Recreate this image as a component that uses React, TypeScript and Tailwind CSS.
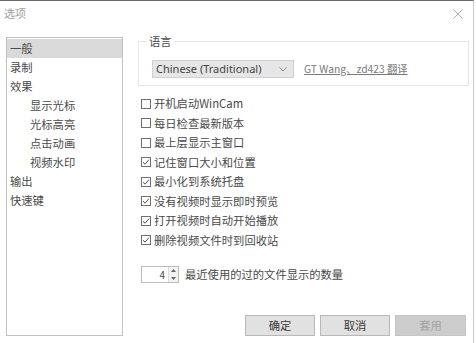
import { useState } from "react";

const NAV = [
  { label: "一般", sub: false },
  { label: "录制", sub: false },
  { label: "效果", sub: false },
  { label: "显示光标", sub: true },
  { label: "光标高亮", sub: true },
  { label: "点击动画", sub: true },
  { label: "视频水印", sub: true },
  { label: "输出", sub: false },
  { label: "快速键", sub: false },
];

const OPTIONS = [
  { label: "开机启动WinCam", checked: false },
  { label: "每日检查最新版本", checked: false },
  { label: "最上层显示主窗口", checked: false },
  { label: "记住窗口大小和位置", checked: true },
  { label: "最小化到系统托盘", checked: true },
  { label: "没有视频时显示即时预览", checked: true },
  { label: "打开视频时自动开始播放", checked: true },
  { label: "删除视频文件时到回收站", checked: true },
];

function CheckBox({ checked }: { checked: boolean }) {
  return (
    <span className="w-[10px] h-[10px] border border-[#707070] bg-white flex items-center justify-center shrink-0">
      {checked && (
        <svg width="8" height="8" viewBox="0 0 8 8">
          <path d="M1 4.2 L3.1 6.2 L7 1.6" fill="none" stroke="#555" strokeWidth="1" />
        </svg>
      )}
    </span>
  );
}

export default function App() {
  const [active, setActive] = useState(0);
  const [opts, setOpts] = useState(OPTIONS.map((o) => o.checked));

  return (
    <div
      className="w-[474px] h-[343px] bg-white border-t border-r border-t-[#6a6a6a] border-r-[#c9c9c9] flex flex-col text-[#4a4a4a]"
      style={{ fontFamily: '"Noto Sans CJK SC", "Noto Sans", sans-serif' }}
    >
      {/* 标题栏 */}
      <div className="h-[25px] flex items-center justify-between pl-[4px] pr-[10px]">
        <span className="text-[11px] text-[#a0a0a0]">选项</span>
        <svg width="10" height="10" viewBox="0 0 10 10">
          <path d="M0.5 0.5 L9.5 9.5 M9.5 0.5 L0.5 9.5" stroke="#b0b0b0" strokeWidth="1" />
        </svg>
      </div>

      <div className="flex flex-1 pl-[6px] pt-[11px]">
        {/* 左侧分类 */}
        <div className="w-[117px] h-[299px] border border-[#c2c2c2] pt-[1px]">
          {NAV.map((item, i) => (
            <div
              key={item.label}
              onClick={() => setActive(i)}
              className={`h-[19px] flex items-center text-[11.3px] leading-none ${
                item.sub ? "pl-[23px]" : "pl-[3px]"
              } ${active === i ? "bg-[#dadada]" : ""}`}
            >
              {item.label}
            </div>
          ))}
        </div>

        {/* 右侧设置 */}
        <div className="ml-[15px] w-[331px] flex flex-col">
          {/* 语言 */}
          <div className="relative mt-[4px] h-[45px] border border-[#e6e6e6] pl-[13px] pt-[18px] flex items-start">
            <span className="absolute -top-[8px] left-[8px] bg-white px-[2px] text-[11.3px] leading-[14px]">
              语言
            </span>
            <div className="w-[142px] h-[18px] bg-[#e6e6e6] border border-[#d0d0d0] flex items-center justify-between pl-[3px] pr-[6px]">
              <span className="text-[11px] text-[#444]" style={{ fontFamily: '"Noto Sans", sans-serif' }}>
                Chinese (Traditional)
              </span>
              <svg width="8" height="5" viewBox="0 0 8 5">
                <path d="M0.5 0.5 L4 4 L7.5 0.5" fill="none" stroke="#8a8a8a" strokeWidth="1" />
              </svg>
            </div>
            <span className="ml-[10px] mt-[1px] text-[10.3px] text-[#7a7a7a] underline leading-[16px]">
              GT Wang、zd423 翻译
            </span>
          </div>

          {/* 常规选项 */}
          <div className="mt-[8px] flex flex-col pl-[3px]">
            {OPTIONS.map((o, i) => (
              <label
                key={o.label}
                onClick={() => setOpts(opts.map((v, j) => (j === i ? !v : v)))}
                className="h-[19.5px] flex items-center gap-[3px] text-[11.3px] leading-none"
              >
                <CheckBox checked={opts[i]} />
                <span>{o.label}</span>
              </label>
            ))}
          </div>

          {/* 最近文件数量 */}
          <div className="mt-[16px] flex items-center pl-[3px]">
            <div className="w-[38px] h-[17px] border border-[#bcbcbc] flex">
              <span className="flex-1 text-right pr-[3px] text-[10px] leading-[15px]">4</span>
              <div className="w-[10px] flex flex-col border-l border-[#dcdcdc] bg-[#f3f3f3]">
                <div className="flex-1 flex items-center justify-center">
                  <svg width="5" height="3" viewBox="0 0 5 3">
                    <path d="M0 3 L2.5 0 L5 3 Z" fill="#666" />
                  </svg>
                </div>
                <div className="flex-1 flex items-center justify-center">
                  <svg width="5" height="3" viewBox="0 0 5 3">
                    <path d="M0 0 L2.5 3 L5 0 Z" fill="#666" />
                  </svg>
                </div>
              </div>
            </div>
            <span className="ml-[6px] text-[11.3px] leading-none">最近使用的过的文件显示的数量</span>
          </div>

          {/* 按钮 */}
          <div className="mt-[32px] flex justify-end gap-[5px] mr-[3px]">
            <button className="w-[70px] h-[21px] bg-[#e1e1e1] border border-[#b8b8b8] text-[11.3px] text-[#3a3a3a]">确定</button>
            <button className="w-[70px] h-[21px] bg-[#e1e1e1] border border-[#b8b8b8] text-[11.3px] text-[#3a3a3a]">取消</button>
            <button className="w-[71px] h-[21px] bg-[#cccccc] border border-[#c6c6c6] text-[11.3px] text-[#a3a3a3]">
              套用
            </button>
          </div>
        </div>
      </div>
    </div>
  );
}
